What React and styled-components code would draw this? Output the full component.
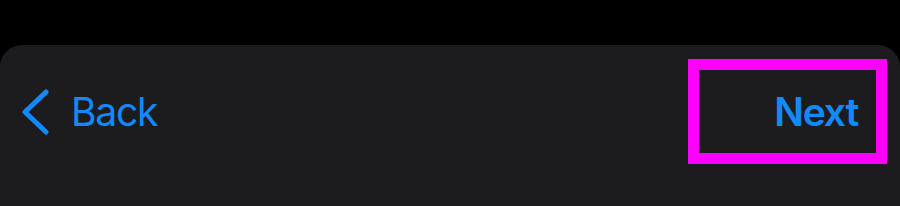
import React from 'react';
import styled, { createGlobalStyle } from 'styled-components';

const GlobalStyle = createGlobalStyle`
  html, body {
    margin: 0;
    padding: 0;
    background: #000000;
    font-family: Inter, "Liberation Sans", sans-serif;
  }
`;

const Page = styled.div`
  width: 900px;
  height: 206px;
  background: #000000;
  padding-top: 45px;
  box-sizing: border-box;
  overflow: hidden;
`;

const Sheet = styled.div`
  height: 161px;
  background: #1c1c1e;
  border-radius: 22px 22px 0 0;
  padding: 14px 13px 0 20px;
  box-sizing: border-box;
`;

const NavBar = styled.div`
  display: flex;
  justify-content: space-between;
  align-items: center;
  height: 105px;
`;

const NavButton = styled.button`
  display: flex;
  align-items: center;
  background: none;
  border: none;
  padding: 0;
  color: #118aff;
  font-family: Inter, "Liberation Sans", sans-serif;
  font-size: 39px;
  font-weight: ${(p) => (p.$bold ? 600 : 400)};
  letter-spacing: -1.2px;
  cursor: pointer;
`;

const BackButton = styled(NavButton)`
  gap: 21px;
`;

const Highlighted = styled.div`
  display: flex;
  align-items: center;
  justify-content: flex-end;
  width: 199px;
  height: 105px;
  box-sizing: border-box;
  border: 11px solid #ff00ff;
  padding-right: 18px;
`;

const Chevron = () => (
  <svg width="30" height="46" viewBox="0 0 30 46" fill="none">
    <polyline
      points="26,3 5,23 26,43"
      stroke="#118aff"
      strokeWidth="5"
      strokeLinecap="round"
      strokeLinejoin="round"
    />
  </svg>
);

export default function App() {
  return (
    <>
      <GlobalStyle />
      <Page>
        <Sheet>
          <NavBar>
            <BackButton>
              <Chevron />
              <span>Back</span>
            </BackButton>
            <Highlighted>
              <NavButton $bold>Next</NavButton>
            </Highlighted>
          </NavBar>
        </Sheet>
      </Page>
    </>
  );
}
